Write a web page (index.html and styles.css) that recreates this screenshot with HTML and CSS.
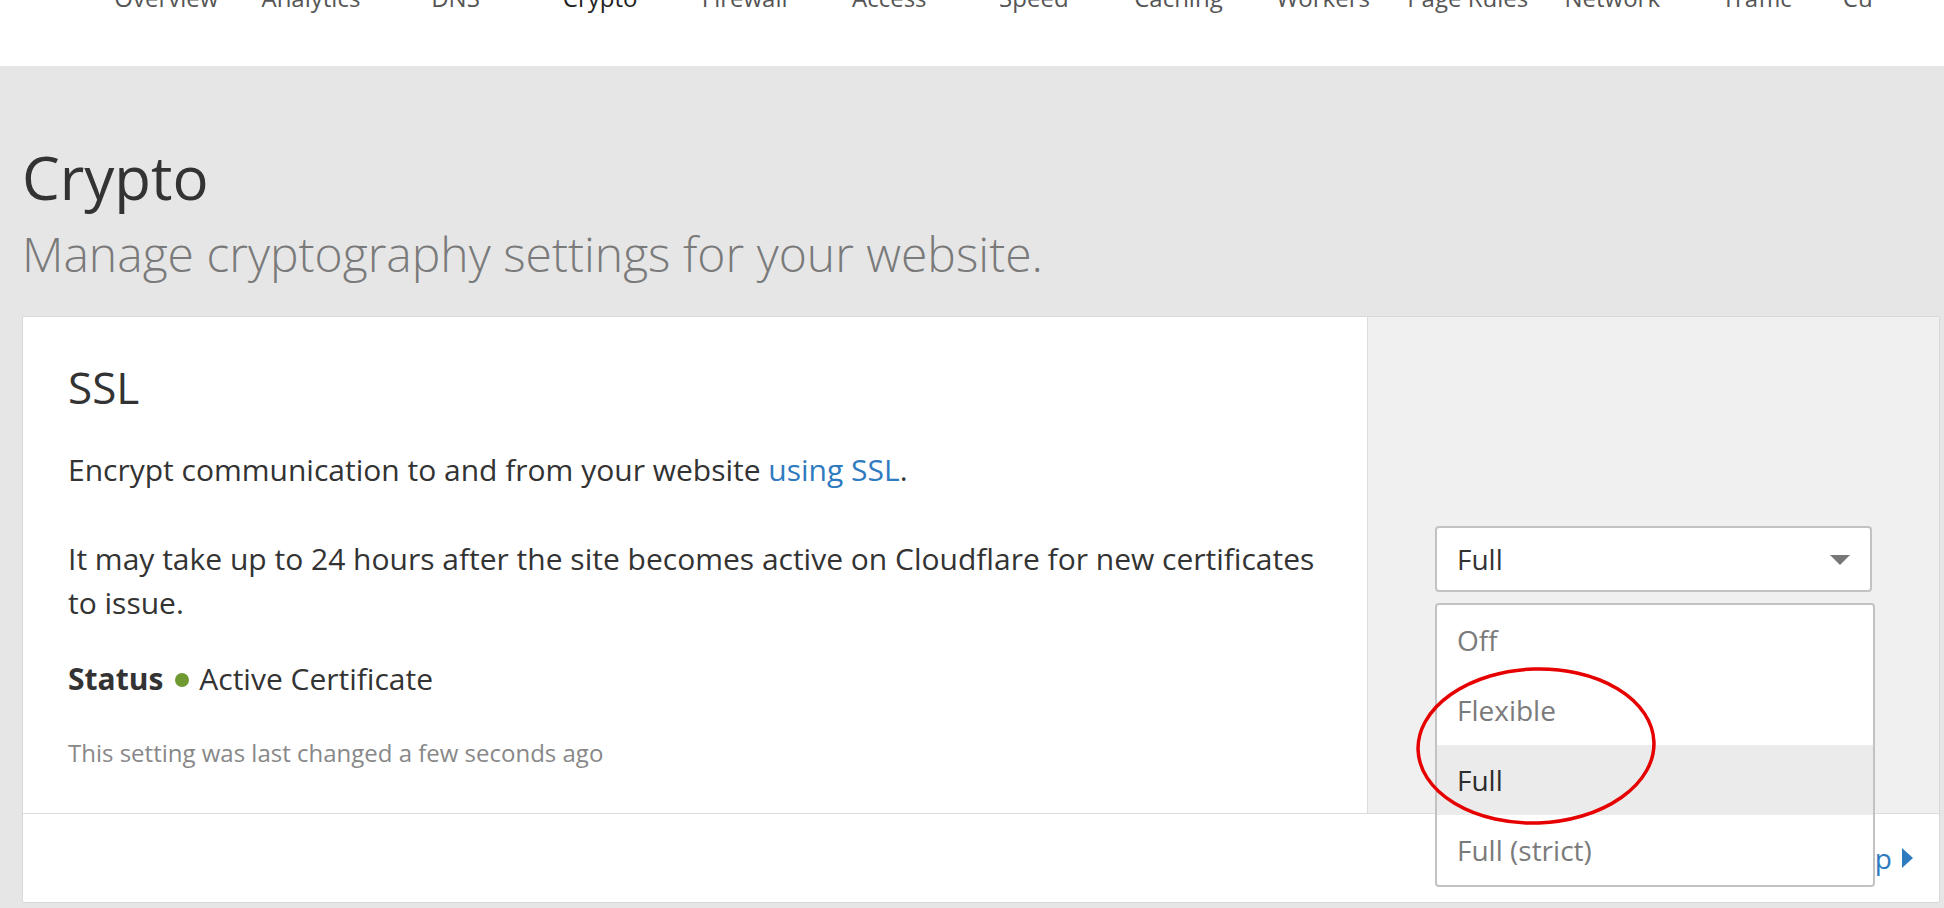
FILE: index.html
```html
<!DOCTYPE html>
<html lang="en">
<head>
<meta charset="utf-8">
<title>Crypto</title>
<link rel="stylesheet" href="styles.css">
</head>
<body>
<header class="topbar">
  <nav class="tabs">
    <a class="tab">Overview</a>
    <a class="tab">Analytics</a>
    <a class="tab">DNS</a>
    <a class="tab tab-active">Crypto</a>
    <a class="tab">Firewall</a>
    <a class="tab">Access</a>
    <a class="tab">Speed</a>
    <a class="tab">Caching</a>
    <a class="tab">Workers</a>
    <a class="tab">Page Rules</a>
    <a class="tab">Network</a>
    <a class="tab">Traffic</a>
    <a class="tab">Customize</a>
  </nav>
</header>
<main class="page">
  <h1 class="page-title">Crypto</h1>
  <p class="page-subtitle">Manage cryptography settings for your website.</p>

  <section class="card">
    <div class="card-body">
      <div class="card-main">
        <h2 class="card-title">SSL</h2>
        <p class="text text-first">Encrypt communication to and from your website <a class="link">using SSL</a>.</p>
        <p class="text">It may take up to 24 hours after the site becomes active on Cloudflare for new certificates to issue.</p>
        <p class="text status"><strong>Status</strong><span class="dot"></span>Active Certificate</p>
        <p class="note">This setting was last changed a few seconds ago</p>
      </div>
      <div class="card-side">
        <div class="select-wrap">
          <div class="select">
            <span>Full</span>
            <span class="caret"></span>
          </div>
          <ul class="menu">
            <li class="menu-item">Off</li>
            <li class="menu-item">Flexible</li>
            <li class="menu-item menu-item-selected">Full</li>
            <li class="menu-item">Full (strict)</li>
            <svg class="mark" width="244" height="162" viewBox="0 0 244 162" aria-hidden="true">
              <ellipse cx="122" cy="81" rx="118" ry="77" fill="none" stroke="#e60000" stroke-width="3.5" transform="rotate(-2 122 81)"/>
            </svg>
          </ul>
        </div>
      </div>
    </div>
    <div class="card-footer">
      <a class="help">Help <span class="help-arrow"></span></a>
    </div>
  </section>
</main>
</body>
</html>
```

FILE: styles.css
```css
* {
  box-sizing: border-box;
}

html, body {
  margin: 0;
  padding: 0;
}

body {
  font-family: "Open Sans", "Noto Sans", "Liberation Sans", sans-serif;
  background: #e6e6e6;
  color: #333;
  height: 908px;
  overflow: hidden;
}

.topbar {
  background: #fff;
  height: 66px;
  overflow: hidden;
}

.tabs {
  display: flex;
  margin-top: -17px;
  padding-left: 94px;
  width: 1872px;
  overflow: hidden;
}

.tab {
  flex: 0 0 144.6px;
  text-align: center;
  font-size: 24px;
  line-height: 30px;
  color: #555;
  white-space: nowrap;
}

.tab-active {
  color: #222;
}

.page {
  padding: 75px 4px 0 22px;
}

.page-title {
  margin: 0;
  font-size: 60px;
  font-weight: 400;
  line-height: 72px;
  color: #333;
}

.page-subtitle {
  margin: 11px 0 32px;
  font-size: 48px;
  font-weight: 300;
  line-height: 60px;
  color: #7a7a7a;
}

.card {
  background: #fff;
  border: 1px solid #d8d8d8;
  border-radius: 2px;
}

.card-body {
  display: grid;
  grid-template-columns: 1fr 572px;
}

.card-main {
  padding: 44px 45px 44px;
}

.card-title {
  margin: 0 0 34px;
  font-size: 44px;
  font-weight: 400;
  line-height: 53px;
  color: #333;
}

.text {
  margin: 0 0 32px;
  font-size: 30px;
  line-height: 44px;
  color: #333;
}

.text-first {
  margin-bottom: 45px;
}

.status {
  margin-bottom: 35px;
}

.status strong {
  font-weight: 700;
}

.dot {
  display: inline-block;
  width: 14px;
  height: 14px;
  margin: 0 10px 0 12px;
  border-radius: 50%;
  background: #6f9a32;
  vertical-align: 3px;
}

.link {
  color: #2f7bbf;
}

.note {
  margin: 0;
  font-size: 24px;
  line-height: 33px;
  color: #888;
}

.card-side {
  background: #f0f0f0;
  border-left: 1px solid #dcdcdc;
  display: flex;
  align-items: center;
  padding: 0 67px 0 67px;
}

.select-wrap {
  position: relative;
  width: 437px;
  margin-bottom: 12px;
}

.select {
  display: flex;
  align-items: center;
  justify-content: space-between;
  height: 66px;
  padding: 0 20px 0 20px;
  background: #fff;
  border: 2px solid #c2c2c2;
  border-radius: 4px;
  font-size: 28px;
  color: #333;
}

.caret {
  width: 0;
  height: 0;
  border-left: 10px solid transparent;
  border-right: 10px solid transparent;
  border-top: 10px solid #777;
  margin-top: 2px;
}

.menu {
  position: absolute;
  top: 77px;
  left: 0;
  width: 440px;
  margin: 0;
  padding: 0;
  list-style: none;
  background: #fff;
  border: 2px solid #c2c2c2;
  border-radius: 4px;
  z-index: 5;
}

.menu-item {
  height: 70px;
  display: flex;
  align-items: center;
  padding-left: 20px;
  font-size: 28px;
  color: #7b7b7b;
}

.menu-item-selected {
  background: #ebebeb;
  color: #2d2d2d;
}

.mark {
  position: absolute;
  left: -23px;
  top: 60px;
  pointer-events: none;
}

.card-footer {
  border-top: 1px solid #dcdcdc;
  height: 89px;
  display: flex;
  align-items: center;
  justify-content: flex-end;
  padding-right: 26px;
}

.help {
  display: flex;
  align-items: center;
  gap: 10px;
  font-size: 28px;
  color: #2f7bbf;
}

.help-arrow {
  width: 0;
  height: 0;
  border-top: 10px solid transparent;
  border-bottom: 10px solid transparent;
  border-left: 11px solid #2f7bbf;
}
```
